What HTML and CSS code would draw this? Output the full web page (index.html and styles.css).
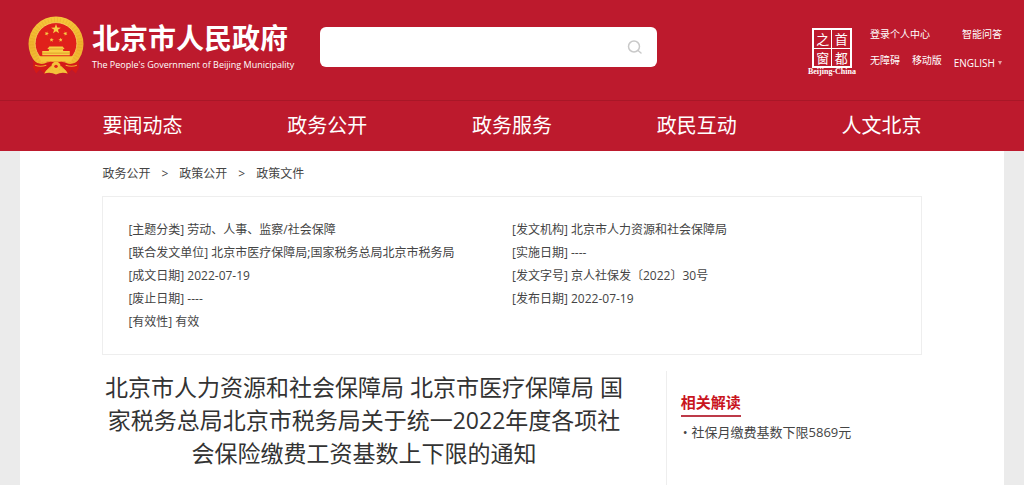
FILE: index.html
```
<!DOCTYPE html>
<html lang="zh-CN">
<head>
  <meta charset="UTF-8">
  <meta name="viewport" content="width=device-width, initial-scale=1.0">
  <title>北京市人民政府</title>
  <link rel="stylesheet" href="styles.css">
</head>
<body>
  <header class="header">
    <div class="top">
      <a href="#" class="logo">
        <svg class="emblem" viewBox="0 0 55 58" aria-hidden="true">
          <defs>
            <linearGradient id="gold" x1="0" y1="0" x2="0" y2="1">
              <stop offset="0" stop-color="#f6c93c"/>
              <stop offset="0.5" stop-color="#efb22c"/>
              <stop offset="1" stop-color="#f4c23a"/>
            </linearGradient>
            <path id="star" d="M0 -5L1.2 -1.6L4.8 -1.5L1.9 0.6L2.9 4L0 2L-2.9 4L-1.9 0.6L-4.8 -1.5L-1.2 -1.6Z"/>
          </defs>
          <!-- ring -->
          <circle cx="27.5" cy="27" r="27" fill="url(#gold)"/>
          <circle cx="27.5" cy="27" r="23.5" fill="none" stroke="#d98a1e" stroke-width="5" stroke-dasharray="1 2" opacity="0.2"/>
          <circle cx="27.5" cy="26.5" r="20.5" fill="#e0201b" stroke="#f9dc6a" stroke-width="0.7"/>
          <!-- stars -->
          <g fill="#f7cf45">
            <use href="#star" x="27.5" y="12.5"/>
            <use href="#star" transform="translate(18.3 16.8) rotate(20) scale(0.45)"/>
            <use href="#star" transform="translate(36.8 16.8) rotate(-20) scale(0.45)"/>
            <use href="#star" transform="translate(23.2 23) rotate(10) scale(0.45)"/>
            <use href="#star" transform="translate(32 23) rotate(-10) scale(0.45)"/>
          </g>
          <!-- gate -->
          <path d="M21 29.5H34L36 32H34.5V34H41V38H14V34H20.5V32H19Z" fill="#f7cf45"/>
          <path d="M20.5 32H34.5M14 36H41" stroke="#d98a1e" stroke-width="0.7"/>
          <path d="M10 39H45L42 44.5H13Z" fill="#f6c63c"/>
          <!-- ribbons and gear -->
          <path d="M5 43Q12 49 19 45L23 48L18 53L17 57L12 52L8 56L5 50Z" fill="#d41a18"/>
          <path d="M50 43Q43 49 36 45L32 48L37 53L38 57L43 52L47 56L50 50Z" fill="#d41a18"/>
          <path d="M18 46Q22 43 27.5 46Q33 43 37 46L33 49H22Z" fill="#d41a18"/>
          <circle cx="27.5" cy="49" r="4.5" fill="#f4c23a"/>
          <circle cx="27.5" cy="49" r="1.7" fill="#e0201b"/>
          <path d="M16 56Q18 51 22 52Q27.5 55 33 52Q37 51 39 56Q33 54 27.5 57Q22 54 16 56Z" fill="#f4c23a"/>
          <path d="M7 48Q12 50 18 48M48 48Q43 50 37 48" fill="none" stroke="#f0aa2c" stroke-width="1"/>
        </svg>
        <span class="logo-text">
          <span class="logo-cn">北京市人民政府</span>
          <span class="logo-en">The People's Government of Beijing Municipality</span>
        </span>
      </a>

      <form class="search" action="#">
        <input type="text" class="search-input" aria-label="搜索">
        <button type="button" class="search-btn" aria-label="搜索">
          <svg viewBox="0 0 16 16" width="16" height="16" fill="none" stroke="#c9c9c9" stroke-width="1.5" stroke-linecap="round">
            <circle cx="7" cy="7.5" r="5.5"/>
            <path d="M11 11.5L14 14"/>
          </svg>
        </button>
      </form>

      <a href="#" class="seal">
        <span class="seal-box"><span>之</span><span>首</span><span>窗</span><span>都</span></span>
        <span class="seal-en">Beijing-China</span>
      </a>

      <div class="tools">
        <div class="tools-row">
          <a href="#">登录个人中心</a>
          <a href="#">智能问答</a>
        </div>
        <div class="tools-row">
          <a href="#">无障碍</a>
          <a href="#">移动版</a>
          <a href="#" class="lang">ENGLISH<span class="arrow"></span></a>
        </div>
      </div>
    </div>

    <nav class="nav">
      <a href="#">要闻动态</a>
      <a href="#">政务公开</a>
      <a href="#">政务服务</a>
      <a href="#">政民互动</a>
      <a href="#">人文北京</a>
    </nav>
  </header>

  <main class="container">
    <div class="crumbs">
      <a href="#">政务公开</a>
      <span>&gt;</span>
      <a href="#">政策公开</a>
      <span>&gt;</span>
      <a href="#">政策文件</a>
    </div>

    <div class="info">
      <ul>
        <li>[主题分类] 劳动、人事、监察/社会保障</li>
        <li>[联合发文单位] 北京市医疗保障局;国家税务总局北京市税务局</li>
        <li>[成文日期] 2022-07-19</li>
        <li>[废止日期] ----</li>
        <li>[有效性] 有效</li>
      </ul>
      <ul>
        <li>[发文机构] 北京市人力资源和社会保障局</li>
        <li>[实施日期] ----</li>
        <li>[发文字号] 京人社保发〔2022〕30号</li>
        <li>[发布日期] 2022-07-19</li>
      </ul>
    </div>

    <div class="content">
      <h1 class="title">北京市人力资源和社会保障局 北京市医疗保障局 国家税务总局北京市税务局关于统一2022年度各项社会保险缴费工资基数上下限的通知</h1>
      <aside class="side">
        <h2>相关解读</h2>
        <ul>
          <li><a href="#">社保月缴费基数下限5869元</a></li>
        </ul>
      </aside>
    </div>
  </main>
</body>
</html>
```
FILE: styles.css
```
* {
  box-sizing: border-box;
}
body {
  display: flex;
  flex-direction: column;
  min-height: 100vh;
  margin: 0;
  background: #ebebeb;
  color: #444;
  font-family: "Open Sans", "Noto Sans CJK SC", sans-serif;
  font-size: 12px;
}
a {
  color: inherit;
  text-decoration: none;
}
ul {
  list-style: none;
  margin: 0;
  padding: 0;
}

/* header */
.header {
  background: #bd1a2d;
  color: #fff;
}
.top {
  display: flex;
  align-items: flex-start;
  height: 100px;
  padding: 16px 22px 0 28px;
}
.logo {
  display: flex;
  gap: 8px;
}
.emblem {
  width: 56px;
  height: 60px;
}
.logo-text {
  display: flex;
  flex-direction: column;
  padding-top: 4px;
  white-space: nowrap;
}
.logo-cn {
  font-size: 28px;
  font-weight: bold;
  line-height: 36px;
}
.logo-en {
  font-size: 9px;
  line-height: 18px;
}
.search {
  display: flex;
  flex: 0 1 337px;
  height: 40px;
  margin: 11px 0 0 26px;
  background: #fff;
  border-radius: 6px;
}
.search-input {
  flex: 1;
  min-width: 0;
  padding: 0 12px;
  border: 0;
  background: none;
  outline: none;
}
.search-btn {
  display: flex;
  align-items: center;
  padding: 0 14px;
  border: 0;
  background: none;
  cursor: pointer;
}
.seal {
  margin: 12px 14px 0 auto;
  text-align: center;
}
.seal-box {
  display: grid;
  grid-template-columns: 1fr 1fr;
  gap: 1px;
  width: 40px;
  height: 40px;
  margin: 0 auto;
  border: 2px solid #fff;
  background: #fff;
}
.seal-box span {
  background: #bd1a2d;
  font-family: "Noto Sans CJK SC", sans-serif;
  font-size: 13px;
  line-height: 17px;
}
.seal-en {
  display: block;
  font: bold 8px/8px "Liberation Serif", serif;
}
.tools {
  width: 132px;
  padding-top: 8px;
  font-size: 10px;
}
.tools-row {
  display: flex;
  justify-content: space-between;
  height: 26px;
  line-height: 20px;
  white-space: nowrap;
}
.lang {
  display: flex;
  align-items: center;
  gap: 3px;
  height: 26px;
}
.arrow {
  border: 2px solid transparent;
  border-top: 4px solid #e8a0a0;
  border-bottom: 0;
}
.nav {
  display: flex;
  justify-content: space-between;
  padding: 0 10%;
  border-top: 1px solid #a81727;
  font-size: 20px;
  line-height: 50px;
}

/* page */
.container {
  flex: 1;
  margin: 0 2%;
  padding: 0 8%;
  background: #fff;
}
.crumbs {
  display: flex;
  gap: 11px;
  line-height: 45px;
  font-size: 12px;
}
.info {
  display: grid;
  grid-template-columns: 1fr 1fr;
  min-height: 158px;
  padding: 21px 25px;
  border: 1px solid #eee;
  line-height: 23px;
}
.content {
  display: flex;
  align-items: stretch;
  padding-top: 16px;
}
.title {
  flex: 1;
  margin: 0;
  padding: 0 40px 15px 0;
  font-size: 23px;
  font-weight: normal;
  line-height: 33px;
  text-align: center;
  color: #333;
}
.side {
  flex: 0 0 256px;
  padding: 18px 0 0 14px;
  border-left: 1px solid #eee;
}
.side h2 {
  display: inline-block;
  margin: 0;
  border-bottom: 2px solid #bd3a48;
  color: #c9151e;
  font-size: 15px;
  line-height: 26px;
}
.side li {
  padding-left: 2px;
  font-size: 13px;
  line-height: 30px;
}
.side li::before {
  content: "•";
  margin-right: 4px;
}
```
